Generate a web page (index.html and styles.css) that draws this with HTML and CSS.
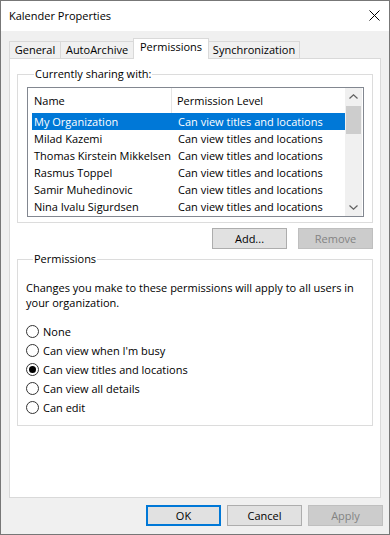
FILE: index.html
```html
<!DOCTYPE html>
<html lang="en">
<head>
    <meta charset="UTF-8">
    <meta name="viewport" content="width=device-width, initial-scale=1.0">
    <title>Kalender Properties</title>
    <link rel="stylesheet" href="styles.css">
</head>
<body>

<div class="window">
    <div class="titlebar">
        <span class="title">Kalender Properties</span>
        <svg class="close" width="11" height="11" viewBox="0 0 11 11">
            <path d="M0.5 0.5L10.5 10.5M10.5 0.5L0.5 10.5" stroke="#000" stroke-width="1" fill="none"/>
        </svg>
    </div>

    <div class="content">
        <div class="tabs">
            <div class="tab tab-general">General</div>
            <div class="tab tab-archive">AutoArchive</div>
            <div class="tab tab-perms active">Permissions</div>
            <div class="tab tab-sync">Synchronization</div>
        </div>

        <div class="panel">
            <fieldset class="group sharing">
                <legend>Currently sharing with:</legend>
                <div class="listbox">
                    <div class="list">
                        <div class="list-head">
                            <div class="col-name">Name</div>
                            <div class="col-level">Permission Level</div>
                        </div>
                        <div class="row selected"><div class="col-name">My Organization</div><div class="col-level">Can view titles and locations</div></div>
                        <div class="row"><div class="col-name">Milad Kazemi</div><div class="col-level">Can view titles and locations</div></div>
                        <div class="row"><div class="col-name">Thomas Kirstein Mikkelsen</div><div class="col-level">Can view titles and locations</div></div>
                        <div class="row"><div class="col-name">Rasmus Toppel</div><div class="col-level">Can view titles and locations</div></div>
                        <div class="row"><div class="col-name">Samir Muhedinovic</div><div class="col-level">Can view titles and locations</div></div>
                        <div class="row"><div class="col-name">Nina Ivalu Sigurdsen</div><div class="col-level">Can view titles and locations</div></div>
                    </div>
                    <div class="scrollbar">
                        <div class="arrow">
                            <svg width="9" height="5" viewBox="0 0 9 5"><path d="M0.5 4.5L4.5 0.8L8.5 4.5" stroke="#606060" stroke-width="1.2" fill="none"/></svg>
                        </div>
                        <div class="track"><div class="thumb"></div></div>
                        <div class="arrow">
                            <svg width="9" height="5" viewBox="0 0 9 5"><path d="M0.5 0.5L4.5 4.2L8.5 0.5" stroke="#606060" stroke-width="1.2" fill="none"/></svg>
                        </div>
                    </div>
                </div>
            </fieldset>

            <div class="list-buttons">
                <button class="btn">Add...</button>
                <button class="btn" disabled>Remove</button>
            </div>

            <fieldset class="group perms">
                <legend>Permissions</legend>
                <p class="note">Changes you make to these permissions will apply to all users in<br>your organization.</p>
                <label class="option"><input type="radio" name="level"> None</label>
                <label class="option"><input type="radio" name="level"> Can view when I'm busy</label>
                <label class="option"><input type="radio" name="level" checked> Can view titles and locations</label>
                <label class="option"><input type="radio" name="level"> Can view all details</label>
                <label class="option"><input type="radio" name="level"> Can edit</label>
            </fieldset>
        </div>

        <div class="footer">
            <button class="btn default">OK</button>
            <button class="btn">Cancel</button>
            <button class="btn" disabled>Apply</button>
        </div>
    </div>
</div>

</body>
</html>
```

FILE: styles.css
```css
body {
    margin: 0;
    font-family: "Open Sans", "Noto Sans", sans-serif;
    font-size: 11px;
    color: #000;
    background: #f0f0f0;
}

.window {
    box-sizing: border-box;
    width: 390px;
    height: 535px;
    border: 1px solid #777;
    background: #f0f0f0;
    display: flex;
    flex-direction: column;
    overflow: hidden;
}

.titlebar {
    height: 30px;
    background: white;
    display: flex;
    align-items: center;
    justify-content: space-between;
    padding: 0 9px 0 8px;
}

.title {
    font-size: 11px;
    padding-bottom: 1px;
}

.close {
    margin-bottom: 1px;
}

.content {
    flex: 1;
    display: flex;
    flex-direction: column;
    padding: 7px 8px 0 8px;
}

/* tabs */
.tabs {
    display: flex;
    align-items: flex-end;
}

.tab {
    box-sizing: border-box;
    height: 17px;
    line-height: 16px;
    text-align: center;
    border: 1px solid #d9d9d9;
    border-bottom: none;
    margin-left: -1px;
    background: #f0f0f0;
}

.tab:first-child {
    margin-left: 0;
}

.tab-general { width: 52px; }
.tab-archive { width: 74px; }
.tab-perms { width: 76px; }
.tab-sync { width: 92px; }

.tab.active {
    position: relative;
    z-index: 1;
    height: 21px;
    margin-bottom: -1px;
    line-height: 15px;
    background: white;
}

.panel {
    flex: 1;
    box-sizing: border-box;
    background: white;
    border: 1px solid #d9d9d9;
    padding: 7px 7px 0 7px;
}

/* group boxes */
.group {
    margin: 0;
    padding: 0;
    border: 1px solid #dcdcdc;
    min-width: 0;
}

.group legend {
    margin-left: 7px;
    padding: 0 1px;
    line-height: 16px;
}

.sharing {
    padding: 5px 8px 5px 9px;
}

.listbox {
    display: flex;
    height: 130px;
    box-sizing: border-box;
    border: 1px solid #828790;
    padding-right: 1px;
}

.list {
    flex: 1;
}

.list-head {
    display: flex;
    height: 25px;
    line-height: 26px;
}

.list-head .col-name {
    width: 144px;
    padding-left: 6px;
    border-right: 1px solid #e5e5e5;
    box-sizing: border-box;
}

.list-head .col-level {
    padding-left: 5px;
}

.row {
    display: flex;
    height: 17px;
    line-height: 17px;
    margin-left: 4px;
    white-space: nowrap;
}

.row .col-name {
    width: 141px;
    padding-left: 2px;
    box-sizing: border-box;
    overflow: hidden;
}

.row .col-level {
    padding-left: 5px;
}

.row.selected {
    background: #0078d7;
    color: white;
}

.scrollbar {
    width: 17px;
    background: #f0f0f0;
    display: flex;
    flex-direction: column;
}

.arrow {
    height: 17px;
    display: flex;
    align-items: center;
    justify-content: center;
}

.track {
    flex: 1;
    padding: 1px 1px 0 1px;
}

.thumb {
    height: 28px;
    background: #cdcdcd;
}

/* buttons */
.btn {
    box-sizing: border-box;
    width: 75px;
    height: 21px;
    padding: 0;
    font-family: inherit;
    font-size: 11px;
    color: #000;
    background: #e1e1e1;
    border: 1px solid #adadad;
    border-radius: 0;
}

.btn:disabled {
    background: #cccccc;
    border-color: #bfbfbf;
    color: #838383;
}

.btn.default {
    border: 2px solid #0078d7;
}

.list-buttons {
    display: flex;
    justify-content: flex-end;
    gap: 11px;
    margin-top: 5px;
}

.perms {
    margin-top: 2px;
    padding: 0 8px 8px 8px;
}

.note {
    margin: 13px 0 12px 0;
    line-height: 15px;
}

.option {
    display: flex;
    align-items: center;
    gap: 4px;
    height: 19px;
}

.option input {
    appearance: none;
    -webkit-appearance: none;
    box-sizing: border-box;
    width: 13px;
    height: 13px;
    margin: 0;
    border: 1px solid #333;
    border-radius: 50%;
    background: white;
    display: flex;
    align-items: center;
    justify-content: center;
}

.option input:checked::after {
    content: "";
    width: 7px;
    height: 7px;
    border-radius: 50%;
    background: #000;
}

.footer {
    display: flex;
    justify-content: flex-end;
    gap: 6px;
    margin-right: -2px;
    padding: 7px 0 8px 0;
}
```
